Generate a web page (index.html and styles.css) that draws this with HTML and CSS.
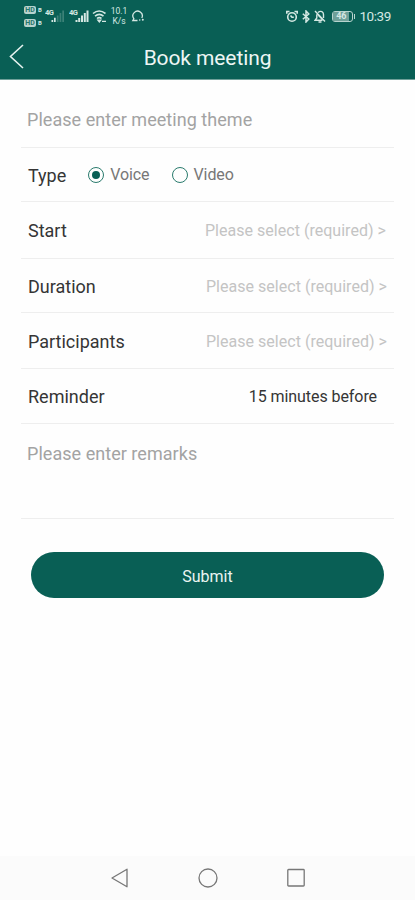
FILE: index.html
```html
<!DOCTYPE html>
<html lang="en">
<head>
<meta charset="utf-8">
<title>Book meeting</title>
<link rel="stylesheet" href="styles.css">
</head>
<body>
<div class="screen">
  <header class="header">
    <div class="status">
      <div class="status-left">
        <div class="sims">
          <div class="sim"><span class="hd">HD</span><span class="sim-no">B</span></div>
          <div class="sim"><span class="hd">HD</span><span class="sim-no">B</span></div>
        </div>
        <svg class="signal" viewBox="0 0 20 14" width="20" height="14">
          <text x="0" y="6" class="net">4G</text>
          <path d="M6.500 13v-2h1.700v2zM9 13V8.700h1.700V13z" fill="#d5e8e3"/>
          <path d="M11.800 13V6.500h1.700V13zM14.600 13V4h1.700v9zM17.300 13V1.500H19V13z" fill="#3c8177"/>
        </svg>
        <svg class="signal second" viewBox="0 0 20 14" width="20" height="14">
          <text x="0" y="6" class="net">4G</text>
          <path d="M6.500 13v-2h2v2zM9.200 13V9h2v4zM12 13V6.500h2V13zM14.800 13V4h2v9zM17.500 13V1.500h2V13z" fill="#d5e8e3"/>
        </svg>
        <svg class="wifi" viewBox="0 0 15 14" width="15" height="14" fill="none" stroke="#d5e8e3" stroke-width="1.600">
          <path d="M1 4.500q6-5 12.500 0M3 7.200q4.300-3.500 8.500 0M5 9.500q2.200-1.800 4.500 0"/>
          <path d="M5.800 11.200h3L7.300 13zM10 12.300h4" stroke-width="1.200"/>
        </svg>
        <div class="speed"><span>10.1</span><span>K/s</span></div>
        <svg viewBox="0 0 14 14" width="14" height="14" fill="none" stroke="#d5e8e3" stroke-width="1.300">
          <path d="M4 11.500H1.800l1-1.800A4.700 4.700 0 1 1 10.800 9M4 11.500h2.500"/>
          <circle cx="8.700" cy="11" r=".8" fill="#d5e8e3" stroke="none"/><circle cx="11.800" cy="10.800" r="1" fill="#d5e8e3" stroke="none"/>
        </svg>
      </div>
      <div class="status-right">
        <svg class="alarm" viewBox="0 0 12 13" width="12" height="13" fill="none" stroke="#d5e8e3" stroke-width="1.600">
          <circle cx="6" cy="7" r="4.300"/><path d="M.8 3.800V1.500h2.700M11.200 3.800V1.500H8.500M4.500 5.500L6 7.300h1.800"/>
        </svg>
        <svg class="bluetooth" viewBox="0 0 8 13" width="8" height="13" fill="none" stroke="#d5e8e3" stroke-width="1.500">
          <path d="M.8 3.700l6 5.300L4 12V1l2.800 3-6 5.300"/>
        </svg>
        <svg class="bell" viewBox="0 0 12 13" width="12" height="13" fill="none" stroke="#d5e8e3" stroke-width="1.400">
          <path d="M1 1l10 10.500M2.800 4.200V8L1 10.300h7.500M4 2.500C7 0 9.500 2.200 9.500 4.500V8M4.500 12h3M4 5l4 4"/>
        </svg>
        <div class="battery"><span>46</span></div>
        <span class="clock">10:39</span>
      </div>
    </div>
    <div class="titlebar">
      <svg class="back" viewBox="0 0 15 26" width="15" height="26" fill="none" stroke="#e6f2ef" stroke-width="1.600"><path d="M14 1L1.500 12.500 14 24"/></svg>
      <h1>Book meeting</h1>
    </div>
  </header>
  <main class="form">
    <div class="row theme"><span class="hint">Please enter meeting theme</span></div>
    <div class="row type">
      <span class="label">Type</span>
      <span class="radio on"></span><span class="option">Voice</span>
      <span class="radio video"></span><span class="option">Video</span>
    </div>
    <div class="row start"><span class="label">Start</span><span class="select">Please select (required) &gt;</span></div>
    <div class="row duration"><span class="label">Duration</span><span class="select">Please select (required) &gt;</span></div>
    <div class="row people"><span class="label">Participants</span><span class="select">Please select (required) &gt;</span></div>
    <div class="row reminder"><span class="label">Reminder</span><span class="value">15 minutes before</span></div>
    <div class="row remarks"><span class="hint">Please enter remarks</span></div>
    <button class="submit">Submit</button>
  </main>
  <nav class="navbar">
    <svg viewBox="0 0 20 22" width="20" height="22"><path d="M17 2.200v17.600L2 11z"/></svg>
    <svg viewBox="0 0 20 22" width="20" height="22"><circle cx="10" cy="11" r="9"/></svg>
    <svg viewBox="0 0 20 22" width="20" height="22"><rect x="1.800" y="2.500" width="16.400" height="16.500" rx=".8"/></svg>
  </nav>
</div>
</body>
</html>
```
FILE: styles.css
```css
* { box-sizing: border-box; }
body { margin: 0; font-family: Roboto, sans-serif; background: #fefefe; }
.screen { width: 415px; height: 900px; display: flex; flex-direction: column; background: #fefefe; }
.header { height: 80px; background: #095f55; color: #e9f4f1; border-bottom: 1px solid #6fa099; }
.status { height: 34px; display: flex; justify-content: space-between; padding: 0 24px 0 24px; color: #d5e8e3; }
.status-left, .status-right { display: flex; align-items: center; height: 32px; }
.sims { display: flex; flex-direction: column; gap: 4px; width: 19px; }
.sim { display: flex; align-items: center; gap: 2px; height: 9px; }
.hd { width: 12px; height: 8px; border-radius: 2px; background: #b7d3ce; color: #27766b; font-size: 7px; line-height: 8px; font-weight: 700; text-align: center; }
.sim-no { font-size: 6px; font-weight: 700; line-height: 8px; }
.net { font-size: 7.5px; font-weight: 700; fill: #d5e8e3; letter-spacing: -.5px; }
.signal { margin-left: 2px; }
.second { margin-left: 4px; }
.wifi { margin-left: 3px; }
.speed { display: flex; flex-direction: column; align-items: center; width: 18px; margin: 0 3px 0 3px; font-size: 8.5px; line-height: 10px; }
.bluetooth { margin-left: 4px; }
.bell { margin-left: 4px; }
.battery { position: relative; width: 21px; height: 11px; margin-left: 6px; border: 1px solid #b7d3ce; border-radius: 3px; display: flex; align-items: center; }
.battery span { width: 16px; height: 9px; background: #6fa099; font-size: 9px; line-height: 9px; text-align: center; font-weight: 700; }
.battery::after { content: ""; position: absolute; right: -3px; top: 2px; width: 1.5px; height: 5px; background: #b7d3ce; }
.clock { margin-left: 6px; font-size: 13.500px; line-height: 16px; letter-spacing: -.4px; }
.titlebar { height: 45px; display: grid; grid-template-columns: 24px 1fr 24px; align-items: center; }
.back { margin-left: 9px; }
h1 { margin: 0; padding-top: 2px; text-align: center; font-size: 21px; line-height: 26px; font-weight: 400; color: #edf6f4; letter-spacing: -.1px; }
.form { flex: 1; padding: 0 21px; display: flex; flex-direction: column; }
.row { display: flex; align-items: center; padding: 2px 7px 0; border-bottom: 1px solid #eee; }
.theme { height: 68px; padding: 12px 6px 0; }
.type { height: 54px; padding-top: 0; }
.type .label { padding-top: 2px; }
.start { height: 57px; }
.start .select { margin-right: 1px; }
.duration { height: 54px; }
.people { height: 56px; }
.reminder { height: 55px; }
.remarks { height: 95px; align-items: flex-start; padding: 19px 6px 0; }
.hint { font-size: 18px; line-height: 22px; color: #a3a3a3; letter-spacing: .04px; }
.label { font-size: 18px; line-height: 22px; color: #353535; }
.option { font-size: 16px; line-height: 20px; color: #777; letter-spacing: -.1px; }
.radio { width: 16px; height: 16px; border: 1.500px solid #2a7b6d; border-radius: 50%; margin: 0 6px 0 22px; display: flex; align-items: center; justify-content: center; }
.on::before { content: ""; width: 8px; height: 8px; border-radius: 50%; background: #095f55; }
.select { margin-left: auto; font-size: 16px; line-height: 20px; color: #c4c4c4; letter-spacing: .03px; }
.value { margin-left: auto; margin-right: 10px; font-size: 16px; line-height: 20px; color: #353535; letter-spacing: -.07px; }
.submit { margin: 33px 10px 0; height: 46px; border: 0; border-radius: 23px; background: #095f55; color: #e9f4f1; font: 400 16px/20px Roboto, sans-serif; padding: 3px 0 0; }
.navbar { height: 44px; background: #fbfbfb; display: flex; justify-content: center; align-items: center; gap: 68px; }
.navbar svg { fill: none; stroke: #777; stroke-width: 1.300; stroke-linejoin: round; }
```
